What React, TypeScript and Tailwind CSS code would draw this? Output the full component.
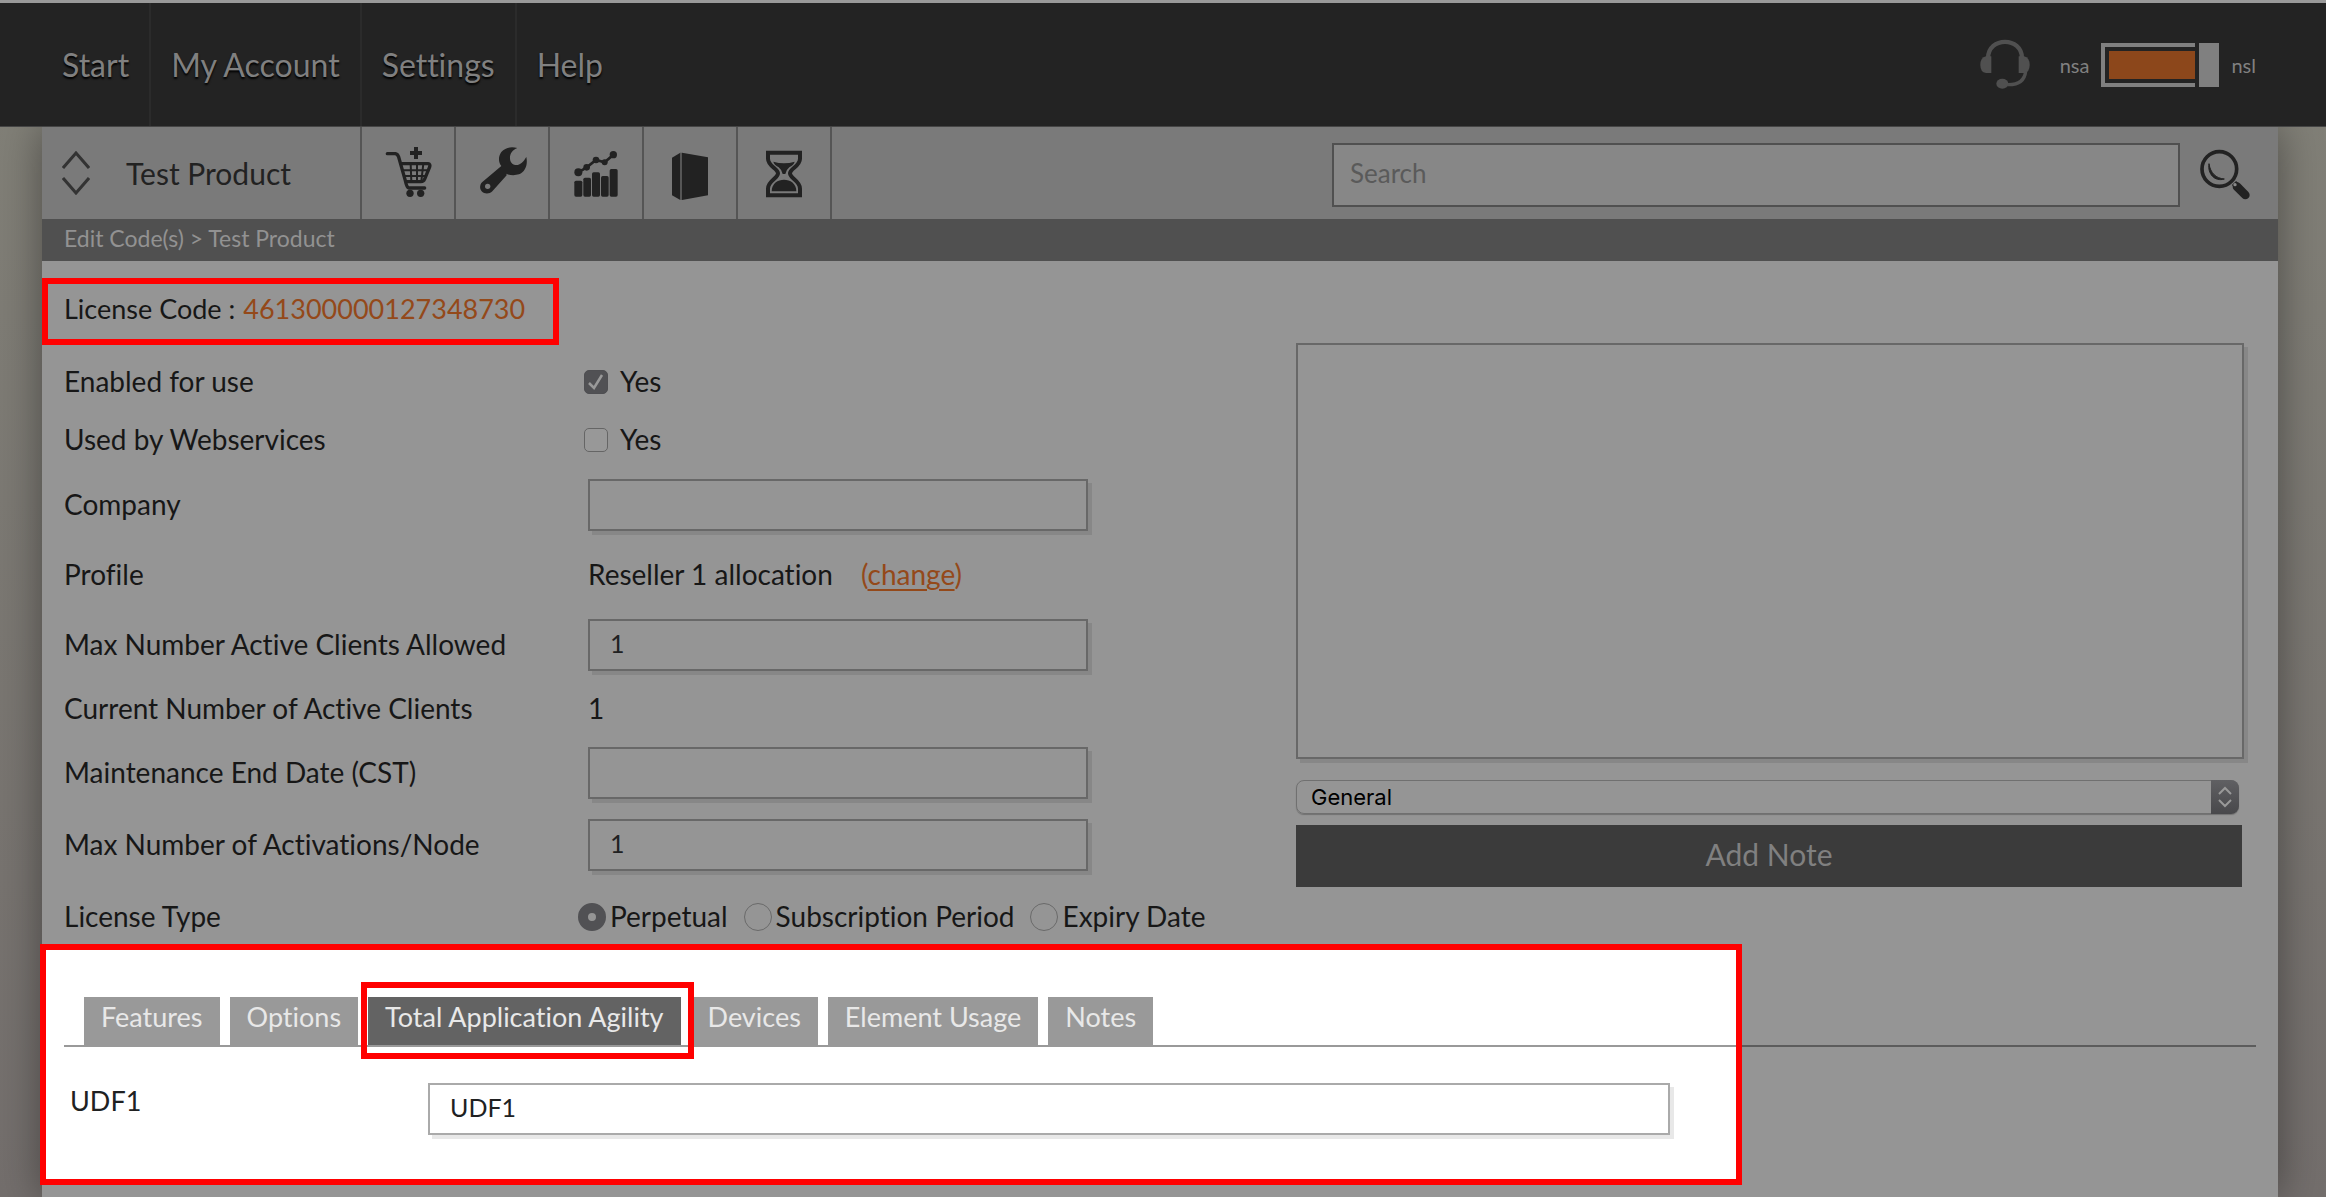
import { useState } from "react";
import type { ReactNode } from "react";

const menu = ["Start", "My Account", "Settings", "Help"];

const tabs = ["Features", "Options", "Total Application Agility", "Devices", "Element Usage", "Notes"];

const licenseTypes = ["Perpetual", "Subscription Period", "Expiry Date"];

const inputClass =
  "h-[52px] border-2 border-[#686868] bg-transparent px-5 pb-1 text-[25px] text-[#202122] shadow-[4px_4px_0_#878787] outline-none";

function CartIcon() {
  return (
    <svg viewBox="66 51 276 276" className="size-[92px]" fill="none" stroke="#222" strokeWidth="9">
      <path d="M142 131H166Q173 132 176 141L196 212Q200 232 206 234H254" strokeWidth="10" strokeLinecap="round" strokeLinejoin="round" />
      <path d="M184 161H264Q272 162 269 171L254 207Q251 215 243 215H200" strokeWidth="10" />
      <path d="M188 181H262M192 198H256" strokeWidth="6" />
      <path d="M212 161L214 214M231 161V214M250 161L244 214" strokeWidth="6" />
      <path d="M228 111V147M210 129H246" strokeWidth="12" />
      <circle cx="210" cy="250" r="11" fill="#222" stroke="none" />
      <circle cx="242" cy="250" r="11" fill="#222" stroke="none" />
    </svg>
  );
}

function WrenchIcon() {
  return (
    <svg viewBox="348 51 276 276" className="size-[92px]" fill="#222">
      <path d="M532 114C517 120 509 132 510 146C511 159 520 166 533 165C545 162 552 152 559 141C564 165 556 185 537 193C524 197 508 196 499 191L500 196L457 244C448 253 433 253 425 244C418 236 419 223 427 216L484 168C474 155 475 139 484 126C496 112 514 109 532 114Z" />
      <circle cx="443" cy="229" r="8" fill="#7a7a7a" />
    </svg>
  );
}

function ChartIcon() {
  return (
    <svg viewBox="630 51 276 276" className="size-[92px]" fill="#222">
      <rect x="703" y="212" width="24" height="48" rx="5" />
      <rect x="730" y="203" width="23" height="57" rx="5" />
      <rect x="756" y="187" width="24" height="73" rx="5" />
      <rect x="783" y="198" width="23" height="62" rx="5" />
      <rect x="809" y="177" width="24" height="83" rx="5" />
      <path d="M715 187L740 172L768 150L794 157L820 134" fill="none" stroke="#222" strokeWidth="8" />
      <circle cx="715" cy="187" r="12" />
      <circle cx="740" cy="172" r="10" />
      <circle cx="768" cy="150" r="10" />
      <circle cx="794" cy="157" r="9" />
      <circle cx="820" cy="134" r="11" />
    </svg>
  );
}

function BoxIcon() {
  return (
    <svg viewBox="912 51 276 276" className="size-[92px]" fill="#222">
      <path d="M996 143L1021 128V270L996 256Z" />
      <path d="M1021 128H1026V270H1021Z" fill="#555" />
      <path d="M1026 128L1104 142V256L1026 270Z" />
    </svg>
  );
}

function HourglassIcon() {
  return (
    <svg viewBox="1194 51 276 276" className="size-[92px]" fill="#222">
      <path
        d="M1284 128H1380V146C1380 168 1350 176 1350 190C1350 206 1380 212 1380 236V256H1284V236C1284 212 1314 206 1314 190C1314 176 1284 168 1284 146Z"
        fill="none"
        stroke="#222"
        strokeWidth="12"
      />
      <path d="M1300 155Q1332 164 1364 155Q1362 164 1348 172Q1338 180 1336 192H1328Q1326 180 1316 172Q1302 164 1300 155Z" />
      <path d="M1295 244C1295 198 1369 198 1369 244Z" />
    </svg>
  );
}

function SearchIcon() {
  return (
    <svg viewBox="900 450 150 156" className="h-[52px] w-[50px]" fill="none" stroke="#222">
      <circle cx="958" cy="510" r="52" strokeWidth="11" />
      <path d="M927 494C922 524 944 549 973 540C948 538 931 522 927 494Z" fill="#222" strokeWidth="3" />
      <path d="M1002 552L1010 560" strokeWidth="18" />
      <path d="M1011 563L1036 588" strokeWidth="26" strokeLinecap="round" />
      <circle cx="1005" cy="557" r="5" fill="#888" stroke="none" />
    </svg>
  );
}

function HeadsetIcon() {
  return (
    <svg viewBox="240 120 150 153" className="h-[51px] w-[50px]" fill="#505050">
      <path d="M264 178C264 112 366 112 366 178" fill="none" stroke="#505050" strokeWidth="13" />
      <path d="M274 172V222H258Q241 220 241 198Q241 176 258 172Z" />
      <path d="M356 172V222H372Q389 220 389 198Q389 176 372 172Z" />
      <path d="M377 216C374 246 354 258 322 257" fill="none" stroke="#505050" strokeWidth="10" />
      <ellipse cx="307" cy="254" rx="18" ry="15" />
    </svg>
  );
}

const tools = [
  { label: "Add to cart", icon: CartIcon },
  { label: "Tools", icon: WrenchIcon },
  { label: "Reports", icon: ChartIcon },
  { label: "Products", icon: BoxIcon },
  { label: "Pending", icon: HourglassIcon },
];

function Header() {
  return (
    <header className="relative z-10 flex h-[127px] items-stretch border-t-3 border-b border-t-[#999] border-b-[#454545] bg-[#232323] pr-[70px] pl-[42px] text-[#808080]">
      <nav className="flex">
        {menu.map((item) => (
          <a
            key={item}
            href="#"
            className="flex items-center border-r-2 border-[#2b2b2b] px-5 text-[32px] [text-shadow:0_2px_2px_#000] last:border-r-0"
          >
            {item}
          </a>
        ))}
      </nav>
      <div className="ml-auto flex items-center">
        <HeadsetIcon />
        <label htmlFor="environment" className="ml-[30px] flex items-center gap-3 text-[20px]">
          nsa
          <input id="environment" type="checkbox" defaultChecked className="peer sr-only" />
          <span className="flex h-11 w-[118px] gap-1">
            <span className="flex-1 border-4 border-r-0 border-[#808080] py-1 pl-1">
              <span className="block h-full bg-[#8c471b]" />
            </span>
            <span className="w-5 bg-[#808080]" />
          </span>
          nsl
        </label>
      </div>
    </header>
  );
}

function Toolbar() {
  return (
    <div className="flex h-[92px] items-stretch bg-[#7a7a7a]">
      <button className="flex w-[320px] items-center gap-9 border-r-2 border-[#555] pl-5 text-[30px] text-[#222]">
        <svg viewBox="0 0 28 44" className="h-11 w-7" fill="none" stroke="#333" strokeWidth="3">
          <path d="M1 17L14 2L27 17M1 27L14 42L27 27" />
        </svg>
        Test Product
      </button>
      {tools.map((tool) => (
        <button key={tool.label} aria-label={tool.label} className="w-[94px] border-r-2 border-[#555]">
          <tool.icon />
        </button>
      ))}
      <form className="ml-auto flex w-[946px] items-center gap-5 pt-1 pr-7">
        <input
          aria-label="Search"
          placeholder="Search"
          className="h-16 min-w-0 flex-1 border-2 border-[#505050] bg-[#878787] px-4 pb-1 text-[26px] outline-none placeholder:text-[#5a5a5a]"
        />
        <button type="button" aria-label="Search">
          <SearchIcon />
        </button>
      </form>
    </div>
  );
}

function Row({ label, htmlFor, height, children }: { label: string; htmlFor?: string; height: string; children: ReactNode }) {
  return (
    <div className={`flex items-center ${height}`}>
      {htmlFor ? (
        <label htmlFor={htmlFor} className="w-[524px] pb-0.5">
          {label}
        </label>
      ) : (
        <span className="w-[524px] pb-0.5">{label}</span>
      )}
      {children}
    </div>
  );
}

function Check({ id, checked }: { id: string; checked?: boolean }) {
  return (
    <label className="-ml-1 flex items-center gap-3">
      <span className="relative size-6">
        <input
          id={id}
          type="checkbox"
          defaultChecked={checked}
          className="peer block size-6 appearance-none rounded-[5px] border border-[#656565] bg-[#989898] checked:border-[#4f4f52] checked:bg-[#515154]"
        />
        <svg viewBox="0 0 24 24" className="pointer-events-none absolute inset-0 hidden peer-checked:block" fill="none" stroke="#999" strokeWidth="2.5">
          <path d="M5 13L10 18L18 5" />
        </svg>
      </span>
      <span className="pb-0.5">Yes</span>
    </label>
  );
}

function LicenseForm() {
  return (
    <div className="text-[28px] text-[#171717]">
      <Row label="Enabled for use" htmlFor="enabled" height="h-[58px]">
        <Check id="enabled" checked />
      </Row>
      <Row label="Used by Webservices" htmlFor="webservices" height="h-[58px]">
        <Check id="webservices" />
      </Row>
      <Row label="Company" htmlFor="company" height="h-[72px]">
        <input id="company" className={`${inputClass} w-[500px]`} />
      </Row>
      <Row label="Profile" height="h-[68px]">
        <span className="pb-0.5">Reseller 1 allocation</span>
        <span className="ml-7 pb-0.5 text-[#94491a]">
          (
          <a href="#" className="underline underline-offset-4">
            change
          </a>
          )
        </span>
      </Row>
      <Row label="Max Number Active Clients Allowed" htmlFor="clients" height="h-[72px]">
        <input id="clients" defaultValue="1" className={`${inputClass} w-[500px]`} />
      </Row>
      <Row label="Current Number of Active Clients" height="h-[56px]">
        <span className="pb-0.5">1</span>
      </Row>
      <Row label="Maintenance End Date (CST)" htmlFor="maintenance" height="h-[72px]">
        <input id="maintenance" className={`${inputClass} w-[500px]`} />
      </Row>
      <Row label="Max Number of Activations/Node" htmlFor="activations" height="h-[72px]">
        <input id="activations" defaultValue="1" className={`${inputClass} w-[500px]`} />
      </Row>
      <Row label="License Type" height="h-[63px] pt-2">
        <div className="-ml-2.5 flex gap-4">
          {licenseTypes.map((type) => (
            <label key={type} className="flex items-center gap-1">
              <input
                type="radio"
                name="license-type"
                defaultChecked={type === "Perpetual"}
                className="size-7 appearance-none rounded-full border border-[#6a6a6a] bg-[#959595] checked:border-[10px] checked:border-[#515154]"
              />
              <span className="pb-0.5">{type}</span>
            </label>
          ))}
        </div>
      </Row>
    </div>
  );
}

function NotePanel() {
  return (
    <div className="w-[948px]">
      <textarea
        aria-label="Note"
        className="block h-[416px] w-full resize-none border-2 border-[#686868] bg-transparent p-4 text-[25px] shadow-[4px_4px_0_#878787] outline-none"
      />
      <div className="relative mt-[21px] mr-[5px] h-[34px]">
        <select
          aria-label="Note type"
          className="h-full w-full appearance-none rounded-lg border border-[#707070] px-3.5 font-[Inter,sans-serif] text-[22px] text-black shadow-[0_1px_1px_#707070] outline-none"
        >
          <option>General</option>
        </select>
        <span className="pointer-events-none absolute inset-y-0 right-0 flex w-7 items-center justify-center rounded-r-lg bg-linear-to-b from-[#606063] to-[#48484b]">
          <svg viewBox="0 0 16 24" className="h-6 w-4" fill="none" stroke="#999" strokeWidth="2">
            <path d="M2 9L8 3L14 9M2 15L8 21L14 15" />
          </svg>
        </span>
      </div>
      <button className="mt-[11px] block h-[62px] w-[946px] bg-[#3b3b3b] pb-1 text-[30px] text-[#808080]">Add Note</button>
    </div>
  );
}

function UserDefinedFields() {
  const [active, setActive] = useState("Total Application Agility");

  return (
    <div className="-ml-0.5 flex items-start">
      <section className="h-[241px] w-[1702px] border-[6px] border-[#ff0000] bg-white">
        <div role="tablist" className="mt-[47px] ml-[18px] flex gap-2.5 border-b-2 border-[#999] pl-5">
          {tabs.map((tab) => (
            <button
              key={tab}
              role="tab"
              aria-selected={tab === active}
              onClick={() => setActive(tab)}
              className="relative h-12 bg-[#999] px-[17px] pb-2 text-[27px] text-[#e8e8e8] aria-selected:bg-[#636363]"
            >
              {tab}
              {tab === active && (
                <span className="pointer-events-none absolute -inset-x-[7px] -top-[15px] -bottom-[14px] z-10 -mr-1.5 border-[6px] border-[#ff0000]" />
              )}
            </button>
          ))}
        </div>
        <div className="mt-9 flex items-start pl-6 text-[27px] text-[#202122]">
          <label htmlFor="udf1" className="w-[358px] leading-9">
            UDF1
          </label>
          <input
            id="udf1"
            defaultValue="UDF1"
            className="h-[52px] w-[1242px] border-2 border-[#aaa] px-5 pb-1 text-[25px] shadow-[4px_4px_0_#e8e8e8] outline-none"
          />
        </div>
      </section>
      <div className="mt-[101px] mr-[22px] h-0.5 flex-1 bg-[#5c5c5c]" />
    </div>
  );
}

export default function App() {
  return (
    <div className="min-h-screen overflow-hidden bg-linear-to-b from-[#828178] to-[#736e6c] font-[Lato,sans-serif] [font-variant-ligatures:no-common-ligatures]">
      <Header />
      <main className="mr-12 ml-[42px] min-h-[1070px] bg-[#959595] shadow-[0_0_40px_rgba(0,0,0,0.4)]">
        <Toolbar />
        <div className="flex h-[42px] items-center bg-[#505050] px-[22px] pb-1 text-[23px] text-[#929292]">
          Edit Code(s) &gt; Test Product
        </div>
        <div className="flex items-start pt-[17px]">
          <div>
            <h1 className="flex h-[67px] w-[517px] items-center gap-2 border-[6px] border-[#ff0000] px-4 pb-1 text-[27px] text-[#171717]">
              License Code : <span className="text-[#94491a]">461300000127348730</span>
            </h1>
            <div className="pt-2 pl-[22px]">
              <LicenseForm />
            </div>
          </div>
          <div className="mt-[65px] mr-[34px] ml-auto">
            <NotePanel />
          </div>
        </div>
        <UserDefinedFields />
      </main>
    </div>
  );
}
